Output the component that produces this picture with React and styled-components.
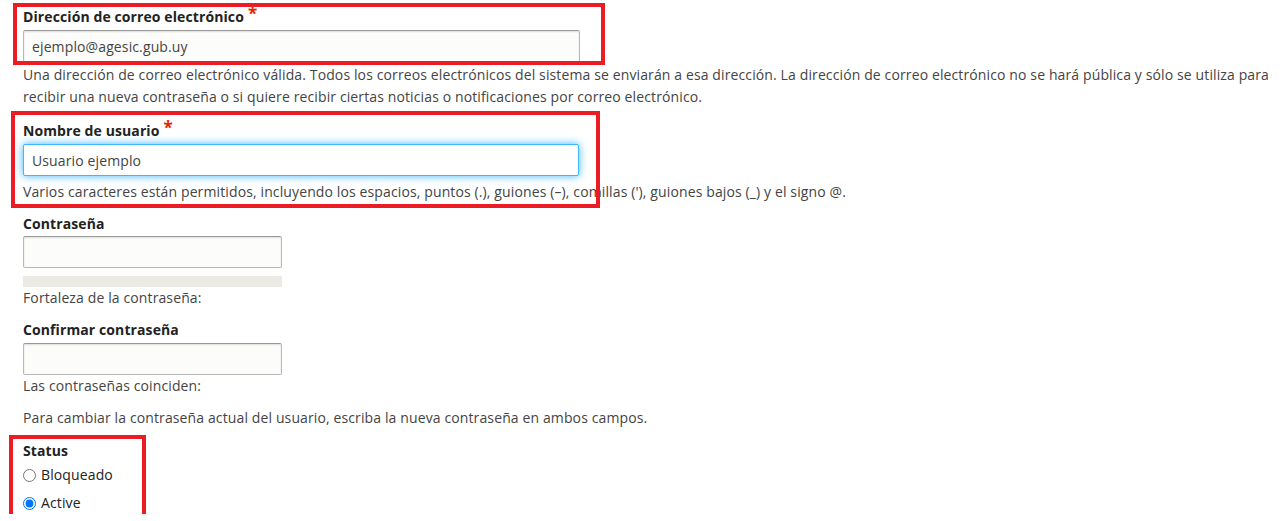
import styled, { createGlobalStyle } from 'styled-components';

const GlobalStyle = createGlobalStyle`
    html, body {
        margin: 0;
        background: #fff;
    }
    body {
        font-family: "Open Sans", "DejaVu Sans", sans-serif;
        font-size: 14px;
        color: #333;
    }
`;

const Form = styled.form`
    display: flex;
    flex-direction: column;
    align-items: flex-start;
    padding: 7px 10px 0 23px;
`;

// red annotation frame drawn over a group of fields
const Highlight = styled.div`
    position: relative;
    display: flex;
    flex-direction: column;
    align-items: flex-start;
    width: ${({ $width }) => $width}px;
    margin-top: ${({ $gap = 0 }) => $gap}px;

    &::after {
        content: '';
        position: absolute;
        top: ${({ $box }) => -$box[0]}px;
        right: ${({ $box }) => -$box[1]}px;
        bottom: ${({ $box }) => -$box[2]}px;
        left: ${({ $box }) => -$box[3]}px;
        border: 4px solid #ec1c24;
        pointer-events: none;
    }
`;

const Label = styled.label`
    display: block;
    font-weight: 700;
    line-height: 20px;
    color: #222;
    letter-spacing: 0.1px;
    margin-top: ${({ $gap = 0 }) => $gap}px;
    margin-bottom: ${({ $after = 3 }) => $after}px;
`;

const Required = styled.span`
    color: #e62600;
    font-size: 17px;
    line-height: 0;
    margin-left: 4px;
    position: relative;
    top: -2px;
`;

const TextInput = styled.input`
    box-sizing: border-box;
    width: ${({ $width }) => $width}px;
    height: 32px;
    margin: 0;
    padding: 0 8px;
    font-family: inherit;
    font-size: 14px;
    letter-spacing: 0.12px;
    color: #444;
    background: ${({ $focused }) => ($focused ? '#fff' : '#fcfcfa')};
    border: 1px solid ${({ $focused }) => ($focused ? '#40b6ff' : '#b8b8b8')};
    border-top-color: ${({ $focused }) => ($focused ? '#40b6ff' : '#999')};
    border-radius: 2px;
    box-shadow: ${({ $focused }) =>
        $focused
            ? 'inset 0 1px 2px rgba(0, 0, 0, 0.05), 0 0 8px #40b6ff'
            : 'inset 0 1px 2px rgba(0, 0, 0, 0.125)'};
    outline: none;
`;

const Description = styled.div`
    line-height: 22px;
    color: #444;
    letter-spacing: 0.12px;
    max-width: 1250px;
    white-space: ${({ $nowrap }) => ($nowrap ? 'nowrap' : 'normal')};
    margin-top: ${({ $gap = 0 }) => $gap}px;
`;

const StrengthBar = styled.div`
    width: 259px;
    height: 11px;
    margin-top: 8px;
    background: #ebeae4;
`;

const RadioRow = styled.label`
    display: flex;
    align-items: center;
    height: 22px;
    line-height: 22px;
    color: #222;
    letter-spacing: 0.12px;
    margin-top: ${({ $gap = 0 }) => $gap}px;
`;

const Radio = styled.input`
    width: 13px;
    height: 13px;
    margin: 0 5px 0 0;
    accent-color: #0075ff;
`;

export default function App() {
    return (
        <>
            <GlobalStyle />
            <Form onSubmit={(e) => e.preventDefault()}>
                <Highlight $width={557} $box={[4, 25, 3, 10]}>
                    <Label>
                        Dirección de correo electrónico<Required>*</Required>
                    </Label>
                    <TextInput $width={557} defaultValue="ejemplo@agesic.gub.uy" />
                </Highlight>
                <Description $gap={2}>
                    Una dirección de correo electrónico válida. Todos los correos electrónicos del sistema se enviarán a esa dirección. La dirección de correo electrónico no se hará pública y sólo se utiliza para recibir una nueva contraseña o si quiere recibir ciertas noticias o notificaciones por correo electrónico.
                </Description>

                <Highlight $width={556} $gap={13} $box={[10, 21, 5, 12]}>
                    <Label>
                        Nombre de usuario<Required>*</Required>
                    </Label>
                    <TextInput $width={556} $focused defaultValue="Usuario ejemplo" />
                    <Description $nowrap $gap={5}>
                        Varios caracteres están permitidos, incluyendo los espacios, puntos (.), guiones (–), comillas ('), guiones bajos (_) y el signo @.
                    </Description>
                </Highlight>

                <Label $gap={11} $after={2}>Contraseña</Label>
                <TextInput $width={259} type="password" />
                <StrengthBar />
                <Description>Fortaleza de la contraseña:</Description>

                <Label $gap={11}>Confirmar contraseña</Label>
                <TextInput $width={259} type="password" />
                <Description>Las contraseñas coinciden:</Description>

                <Description $gap={10}>
                    Para cambiar la contraseña actual del usuario, escriba la nueva contraseña en ambos campos.
                </Description>

                <Highlight $width={100} $gap={12} $box={[6, 23, 4, 14]}>
                    <Label $after={0}>Status</Label>
                    <RadioRow $gap={3}>
                        <Radio type="radio" name="status" value="0" />
                        Bloqueado
                    </RadioRow>
                    <RadioRow $gap={6}>
                        <Radio type="radio" name="status" value="1" defaultChecked />
                        Active
                    </RadioRow>
                </Highlight>
            </Form>
        </>
    );
}
